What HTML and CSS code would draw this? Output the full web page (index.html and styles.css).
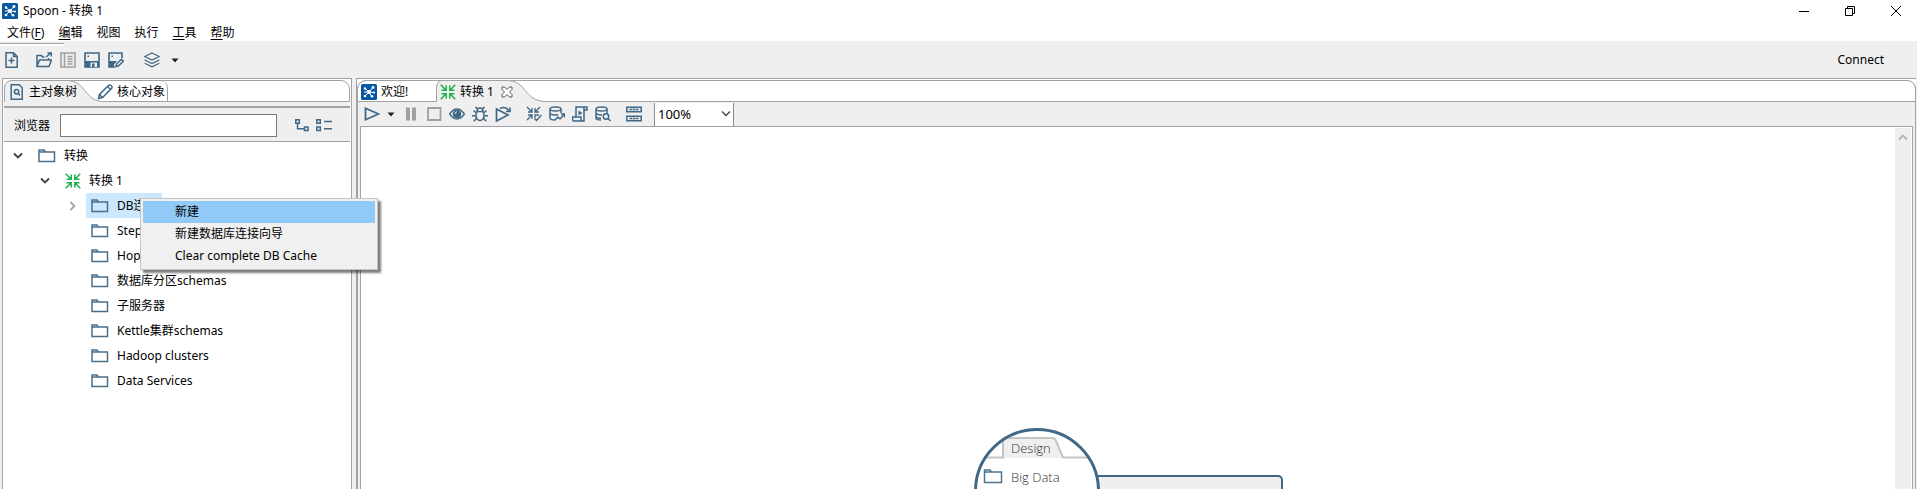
FILE: index.html
```html
<!DOCTYPE html>
<html lang="zh-CN">
<head>
<meta charset="utf-8">
<title>Spoon - 转换 1</title>
<link rel="stylesheet" href="styles.css">
</head>
<body>
<svg class="defs" aria-hidden="true">
  <symbol id="logo" viewBox="0 0 16 16"><rect width="16" height="16" rx="1.500" fill="#0757a2" stroke="none"/><g stroke="#fff" stroke-width="1"><path d="M8 8L4 4.500M8 8l3.500-4M8 8l5 .5M8 8l2.500 4M8 8l-3.500 3.500M8 8L3 8"/></g><g fill="#fff" stroke="none"><circle cx="4" cy="4.500" r="1.200"/><circle cx="12" cy="3.500" r="1.400"/><circle cx="13" cy="8.500" r="1.100"/><circle cx="11" cy="12.300" r="1.300"/><circle cx="4" cy="12" r="1.300"/><circle cx="8" cy="8" r="1.900"/></g></symbol>
  <symbol id="folder" viewBox="0 0 18 16"><path d="M1 13.500V2h5l1.500 2H16.500v9.500zM1 4h7" fill="none" stroke="#4a6f8d" stroke-width="1.500"/></symbol>
  <symbol id="trans" viewBox="0 0 16 16"><path d="M.7.700l5 5M15.300.700l-5 5M.7 15.300l5-5M15.300 15.300l-5-5M1.500 6.200h4.700V1.500M14.500 6.200H9.800V1.500M1.500 9.800h4.700v4.700M14.500 9.800H9.800v4.700" fill="none" stroke="currentColor" stroke-width="1.500"/></symbol>
  <symbol id="caret" viewBox="0 0 8 5"><path d="M.5.500h7L4 4.500z" fill="#222"/></symbol>
  <symbol id="down" viewBox="0 0 10 8"><path d="M1 1.500l4 4 4-4" fill="none" stroke="currentColor"/></symbol>
</svg>

<header class="titlebar">
  <svg class="i16"><use href="#logo"/></svg>
  <h1 class="title">Spoon - 转换 1</h1>
  <div class="wincontrols">
    <button aria-label="最小化"><svg class="i10" viewBox="0 0 10 10"><path d="M0 5.500h10"/></svg></button>
    <button aria-label="还原"><svg class="i10" viewBox="0 0 10 10"><path d="M.5 2.500h7v7h-7zM2.500 2V.5h7v7H8"/></svg></button>
    <button aria-label="关闭"><svg class="i10" viewBox="0 0 10 10"><path d="M0 0l10 10M10 0L0 10"/></svg></button>
  </div>
</header>
<nav class="menubar">
  <button>文件(<u>F</u>)</button><button><u>编</u>辑</button><button>视图</button><button>执行</button><button><u>工</u>具</button><button><u>帮</u>助</button>
</nav>

<div class="toolbar">
  <button class="new" aria-label="新建文件"><svg class="i16" viewBox="0 0 16 16"><path d="M2 .8h7.500L13.200 4.500v10.700H2zM9.500.800v3.700h3.700M7.500 5.500v6M4.500 8.500h6"/></svg></button>
  <button aria-label="打开"><svg class="i16" viewBox="0 0 16 16"><path d="M1 14.500V3.500h4.500l1 1.500h2M1 14.500L3.500 8H15.500L13 14.500zM12.500 8V6M10 5l5-4M11.500 1h3.800v3.500"/></svg></button>
  <button class="dim" aria-label="浏览资源库"><svg class="i16" viewBox="0 0 16 16"><path d="M1 1h14v14H1zM4.500 1v14M7.500 4.500h5M7.500 7h5M7.500 9.500h5M7.500 12h5"/></svg></button>
  <button aria-label="保存"><svg class="i16" viewBox="0 0 16 16"><path stroke-width="1.600" d="M1 1h14v14H1z"/><path class="fill" d="M1 9h14v6H1z"/><path fill="#efefef" stroke="none" d="M6.500 10.500H13V15H6.500z"/><path class="fill" d="M8 11.500h2.500V15H8zM3.500 3.500H5V5H3.500z"/></svg></button>
  <button aria-label="另存为"><svg class="i16" viewBox="0 0 16 16"><path stroke-width="1.600" d="M7 15H1V1h13v5"/><path class="fill" d="M1 9h8l-3 3.500V15H1zM3.500 3.500H5V5H3.500z"/><path d="M8 14.500l.7-2.700 4.600-4.600 2 2-4.600 4.600z" fill="#efefef"/></svg></button>
  <button class="layers" aria-label="视图"><svg class="i16" viewBox="0 0 16 16"><path stroke-width="1.200" d="M8 1l7.300 3.500L8 8 .7 4.500zM.7 8L8 11.500 15.300 8M.7 11.300L8 14.800l7.300-3.500"/></svg></button>
  <button class="drop" aria-label="更多视图"><svg class="caret"><use href="#caret"/></svg></button>
  <button class="connect">Connect</button>
</div>

<main class="workspace">
  <aside class="side">
    <div class="tabs" role="tablist">
      <button class="tab tree-tab" role="tab" aria-selected="true">
        <svg class="tabshape" width="98" height="22" viewBox="0 0 98 22"><path d="M.5 23V8Q1 .5 8 .5h56C81 .5 80 20 97.500 21.500V23z"/></svg>
        <svg class="i16" viewBox="0 0 16 16"><path d="M2.200.800h8l3 3v11.400h-11z"/><circle cx="7.600" cy="7.800" r="2.200"/><path d="M9 9.500l2 2"/></svg><span>主对象树</span>
      </button>
      <button class="tab core-tab" role="tab" aria-selected="false">
        <svg class="i16" viewBox="0 0 16 16"><path d="M1.500 14.500l1-4L11.700 1.300q1-.8 2 0l1 1q.8 1 0 2L5.500 13.500zM10.500 2.500l3 3M2.500 10.500l3 3"/></svg><span>核心对象</span>
      </button>
    </div>
    <div class="band"></div>
    <div class="search">
      <label for="q">浏览器</label><input id="q" type="text">
      <button class="expand" aria-label="展开全部"><svg class="i16" viewBox="0 0 16 16"><path d="M1.800 1.800h3.500v3.500H1.800zM10.500 9H14v3.500h-3.500zM3.500 5.300v5.500h7"/></svg></button>
      <button aria-label="折叠全部"><svg class="i16" viewBox="0 0 16 16"><path d="M.8 1.800h3.500v3.500H.8zM.8 9h3.500v3.500H.8zM8 3.500h8M8 10.800h8"/></svg></button>
    </div>
    <ul class="tree">
      <li class="row l1"><svg class="chev"><use href="#down"/></svg><span class="node"><svg class="fold"><use href="#folder"/></svg>转换</span></li>
      <li class="row l2"><svg class="chev"><use href="#down"/></svg><span class="node"><svg class="i16 green"><use href="#trans"/></svg>转换 1</span></li>
      <li class="row l3"><svg class="chev closed"><use href="#down"/></svg><span class="node sel"><svg class="fold"><use href="#folder"/></svg>DB连接</span></li>
      <li class="row l4"><span class="node"><svg class="fold"><use href="#folder"/></svg>Steps</span></li>
      <li class="row l4"><span class="node"><svg class="fold"><use href="#folder"/></svg>Hops</span></li>
      <li class="row l4"><span class="node"><svg class="fold"><use href="#folder"/></svg>数据库分区schemas</span></li>
      <li class="row l4"><span class="node"><svg class="fold"><use href="#folder"/></svg>子服务器</span></li>
      <li class="row l4"><span class="node"><svg class="fold"><use href="#folder"/></svg>Kettle集群schemas</span></li>
      <li class="row l4"><span class="node"><svg class="fold"><use href="#folder"/></svg>Hadoop clusters</span></li>
      <li class="row l4"><span class="node"><svg class="fold"><use href="#folder"/></svg>Data Services</span></li>
    </ul>
  </aside>

  <section class="editor">
    <div class="folder">
      <div class="tabs" role="tablist">
        <button class="tab welcome" role="tab" aria-selected="false"><svg class="i16"><use href="#logo"/></svg><span>欢迎!</span></button>
        <button class="tab current" role="tab" aria-selected="true">
          <svg class="tabshape" width="108" height="22" viewBox="0 0 108 22"><path d="M.5 23V8Q1 .5 6 .5h66C90 .5 88 20 107.500 21.500V23z"/></svg>
          <svg class="i16 green"><use href="#trans"/></svg><span>转换 1</span>
          <svg class="close" viewBox="0 0 12 12"><path d="M1 1h2.500L6 3.500 8.500 1H11v2.500L8.500 6 11 8.500V11H8.500L6 8.500 3.500 11H1V8.500L3.500 6 1 3.500z"/></svg>
        </button>
      </div>
      <div class="runbar">
        <button aria-label="运行"><svg class="i16" viewBox="0 0 16 16"><path stroke-width="1.800" d="M1.500 2.300L14.500 8 1.500 13.700z"/></svg></button>
        <button class="rundrop" aria-label="运行选项"><svg class="caret"><use href="#caret"/></svg></button>
        <button class="dim" aria-label="暂停"><svg class="i16" viewBox="0 0 16 16"><path class="fill" d="M3 1.500h4v13H3zM9 1.500h4v13H9z"/></svg></button>
        <button class="dim" aria-label="停止"><svg class="i16" viewBox="0 0 16 16"><path stroke-width="1.800" d="M2 2h12.500v12H2z"/></svg></button>
        <button aria-label="预览"><svg class="i16" viewBox="0 0 16 16"><path d="M.5 8Q8-2 15.500 8 8 18 .5 8z"/><circle class="fill" cx="8" cy="8" r="4.300"/><path stroke="#efefef" stroke-width="1" d="M6 8q0-2 2-2.200"/></svg></button>
        <button aria-label="调试"><svg class="i16" viewBox="0 0 16 16"><path d="M5 5.500h6q2 4.500 0 7.500-3 3-6 0-2-3 0-7.500zM5 5q0-3 3-3t3 3M5 2.500L3.500.800M11 2.500L12.500.800M4.500 7L1.500 4.500M11.500 7l3-2.500M4 9.800H0M12 9.800h4M4.500 12L2 15.300M11.500 12l2.500 3.300"/></svg></button>
        <button aria-label="重放"><svg class="i16" viewBox="0 0 16 16"><path stroke-width="1.700" d="M1.500 3L13 9 1.500 15z"/><path d="M5 2.500q5-2.500 9 2M15 1.500v4h-4"/></svg></button>
        <button class="gap" aria-label="检查"><svg class="i16" viewBox="0 0 16 16"><path stroke-width="1.300" d="M1 1l4.500 4.500M14 1L9.500 5.500M1 14l4.500-4.500M2 6h4V2M13 6H9V2M2 9h4v4M13 9H9v3M8.500 12.500l2 2L15.500 9"/></svg></button>
        <button aria-label="影响分析"><svg class="i16" viewBox="0 0 16 16"><path d="M1 3q0-2 5.500-2T12 3t-5.500 2T1 3v9q0 2 5 2M12 3v4M1 7.500q3 2.500 8 1M6 14l3-3 2 2 4-4.500M12 8h3.500v3.500"/></svg></button>
        <button aria-label="SQL"><svg class="i16" viewBox="0 0 16 16"><path d="M4 11V1h11v3h-3v11H2q-1.500 0-1.500-2v-2H9v2q0 2 2 2M12 4V1"/><path class="fill" d="M6.500 4.500L10.500 7l-4 2.500z"/></svg></button>
        <button aria-label="浏览数据库"><svg class="i16" viewBox="0 0 16 16"><path d="M1 3q0-2 5.500-2T12 3t-5.500 2T1 3v9q0 2 5 2M12 3v4M1 7.500q3 2 6 1.500M1 11q2 1.500 5 1.200"/><circle cx="11" cy="10.500" r="2.700"/><path d="M13 12.500l2.500 2.500"/></svg></button>
        <button class="gap" aria-label="显示结果"><svg class="i16" viewBox="0 0 16 16"><path d="M.8 1.200h14.400v4.600H.8zM.8 10.200h14.400v4.600H.8zM3.500 3.500h3M9.500 3.500h3M3.500 12.500h3M9.500 12.500h3M8 2.500v2M8 11.500v2"/></svg></button>
        <div class="zoom"><select aria-label="缩放"><option>100%</option></select><svg class="chev"><use href="#down"/></svg></div>
      </div>
      <div class="canvas">
        <div class="stage">
          <svg class="hint" width="310" height="61" viewBox="0 0 310 61">
            <rect x="100" y="48" width="209" height="40" rx="4" fill="#efefef" stroke="#3f6786" stroke-width="2"/>
            <clipPath id="lens"><circle cx="64" cy="63" r="61"/></clipPath>
            <circle cx="64" cy="63" r="61.500" fill="#fff"/>
            <g clip-path="url(#lens)"><path d="M30 30V10H82L91 30z" fill="#efefef"/><path d="M0 29.500H30V10H79Q82 10 83 13L90 29.500H128" fill="none" stroke="#c4c4c4" stroke-width="2"/></g>
            <circle cx="64" cy="63" r="61.500" fill="none" stroke="#3f6786" stroke-width="3"/>
            <path d="M11.500 54V42h5.500l1.500 2H28.500v10.500h-17zM11.500 44H19" fill="none" stroke="#4a7592" stroke-width="1.500"/>
            <text class="hinttext" x="38" y="25">Design</text><text class="hinttext" x="38" y="54">Big Data</text>
          </svg>
        </div>
        <div class="scroll"><svg class="chev up"><use href="#down"/></svg></div>
      </div>
    </div>
  </section>
</main>

<div class="context" role="menu">
  <button role="menuitem" class="hot">新建</button>
  <button role="menuitem">新建数据库连接向导</button>
  <button role="menuitem">Clear complete DB Cache</button>
</div>
</body>
</html>
```
FILE: styles.css
```css
* { box-sizing: border-box; }
body {
  margin: 0; height: 100vh; display: flex; flex-direction: column; overflow: hidden;
  background: #fff; color: #000;
  font: 12px/16px "Noto Sans", "Noto Sans CJK SC", sans-serif;
}
button { border: 0; padding: 0; background: none; color: inherit; font: inherit; display: flex; align-items: center; }
svg { display: block; flex: none; }
.defs { position: absolute; width: 0; height: 0; }
.i16 { width: 16px; height: 16px; fill: none; stroke: #3f6786; stroke-width: 1.500; }
.fill { fill: #3f6786; stroke: none; }
.dim .i16 { stroke: #a0a0a0; }
.dim .fill { fill: #a0a0a0; }
.green { color: #1faf4b; stroke: none; }
.i10 { width: 10px; height: 10px; fill: none; stroke: #000; }
.caret { width: 8px; height: 5px; }
.chev { width: 10px; height: 8px; color: #404040; stroke-width: 1.800; }

.titlebar { display: flex; align-items: center; gap: 5px; height: 22px; padding-left: 2px; }
.title { margin: 0; font-size: 12px; font-weight: 400; }
.wincontrols { display: flex; gap: 36px; margin-left: auto; padding-right: 16px; }
.menubar { display: flex; gap: 14px; height: 19px; padding: 2px 0 0 7px; }
u { text-underline-offset: 2px; }

.toolbar { position: relative; display: flex; align-items: center; gap: 8px; height: 37px; padding: 1px 33px 0 4px; background: #efefef; }
.toolbar::before { content: ""; position: absolute; left: 0; top: 2px; width: 64px; height: 2px; border-top: 1px solid #a0a0a0; background: #fff; }
.new { margin-right: 8px; }
.layers { margin-left: 12px; }
.drop { margin-left: 3px; }
.connect { margin-left: auto; }

.workspace { flex: 1; min-height: 0; display: flex; gap: 4px; padding: 0 1px 0 2px; background: #efefef; }
.side { width: 350px; flex: none; display: flex; flex-direction: column; padding: 1px 1px 0; border: 1px solid #a0a2a8; border-bottom: 0; background: #fff; }
.tabs { display: flex; height: 22px; flex: none; background: #fff; border: 1px solid #a0a2a4; border-radius: 9px 9px 0 0; }
.tab { position: relative; gap: 4px; padding-top: 1px; white-space: nowrap; }
.tab span, .tab .i16, .close { position: relative; }
.tabshape { position: absolute; left: -1px; top: -1px; fill: #efefef; stroke: #a0a2a4; }
.tree-tab { padding-left: 4px; width: 92px; }
.core-tab { padding-right: 2px; border-right: 1px solid #a0a2a4; border-radius: 0 7px 0 0; }
.band { height: 6px; flex: none; background: #efefef; border-bottom: 2px solid #a0a2a4; }
.search { display: flex; align-items: center; height: 34px; flex: none; padding: 2px 0 0 10px; background: #efefef; border-bottom: 1px solid #a0a2a4; }
.search label { width: 46px; }
.search input { width: 217px; height: 23px; border: 1px solid #7a7a7a; background: #fff; font: inherit; }
.expand { margin: 0 6px 0 17px; }

.tree { list-style: none; margin: 0; padding: 1px 0 0; }
.row { display: flex; align-items: center; height: 25px; }
.l1 { padding-left: 9px; gap: 10px; }
.l2 { padding-left: 36px; gap: 10px; }
.l3 { padding-left: 64px; gap: 8px; }
.l4 { padding-left: 82px; }
.node { display: flex; align-items: center; gap: 8px; height: 25px; padding: 0 5px; white-space: nowrap; }
.sel { background: #cce8ff; padding-right: 4px; }
.fold { width: 18px; height: 16px; }
.closed { transform: rotate(-90deg); color: #a6a6a6; }

.editor { flex: 1; min-width: 0; display: flex; border: 1px solid #a0a2a8; border-width: 1px 0 0 1px; padding-top: 1px; background: #fff; }
.folder { flex: 1; min-width: 0; display: flex; flex-direction: column; border-right: 1px solid #a0a2a4; border-left: 1px solid #a0a2a4; border-radius: 9px 9px 0 0; background: #efefef; }
.folder .tabs { margin: 0 -1px; }
.welcome { padding-left: 3px; width: 78px; }
.current { padding-left: 4px; }
.current .tabshape { left: 0; }
.close { width: 12px; height: 12px; margin-left: 3px; fill: #fff; stroke: #555; stroke-width: 1; }
.runbar { display: flex; align-items: center; gap: 7px; height: 24px; flex: none; padding-left: 6px; }
.rundrop { margin-right: 1px; }
.gap { margin-left: 8px; }
.zoom { display: flex; align-items: center; width: 80px; height: 23px; margin-left: 5px; background: #fff; border: 1px solid #8a8a8a; border-width: 0 1px; padding-right: 2px; }
.zoom select { appearance: none; flex: 1; min-width: 0; height: 21px; padding: 0 0 0 3px; border: 0; background: none; color: #000; font: 13px/16px "Noto Sans", sans-serif; }
.zoom .chev { stroke-width: 1.300; }
.canvas { flex: 1; min-height: 0; display: flex; margin: 0 2px; background: #fff; border: 1px solid #a0a2a8; border-bottom: 0; }
.stage { flex: 1; display: flex; flex-direction: column; justify-content: flex-end; align-items: center; }
.scroll { width: 16px; margin: 1px 1px 0 0; padding: 5px 3px; background: #efefef; }
.up { transform: rotate(180deg); color: #b4b4b4; }
.hinttext { font: 300 13px "Open Sans", sans-serif; fill: #333; }

.context { position: absolute; left: 140px; top: 198px; width: 238px; padding: 2px; border: 1px solid #c4c4c4; background: #f0f0f0; box-shadow: 3px 3px 2px rgba(0, 0, 0, .5); }
.context button { width: 100%; height: 22px; padding-left: 32px; }
.context .hot { background: #91c9f7; }
```
